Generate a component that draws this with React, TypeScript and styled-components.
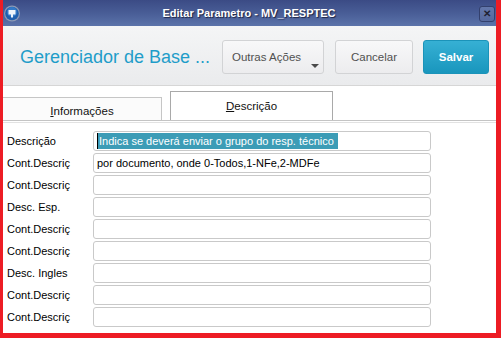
import React from 'react';
import styled, { createGlobalStyle } from 'styled-components';

const GlobalStyle = createGlobalStyle`
  html, body {
    margin: 0;
    padding: 0;
    background: #ffffff;
  }
  * {
    box-sizing: border-box;
  }
`;

const Frame = styled.div`
  width: 501px;
  height: 338px;
  background-color: #ed1c24;
  padding: 0 5px 5px 3px;
  font-family: 'Liberation Sans', Arial, sans-serif;
`;

const Window = styled.div`
  height: 100%;
  display: flex;
  flex-direction: column;
  background-color: #ffffff;
  overflow: hidden;
`;

const TitleBar = styled.div`
  height: 26px;
  flex-shrink: 0;
  display: flex;
  align-items: center;
  padding: 0 1px 0 0;
  background: linear-gradient(to bottom, #3b4b85 0%, #4a5f98 55%, #5b73aa 100%);
`;

const Logo = styled.div`
  width: 18px;
  height: 18px;
  display: flex;
  align-items: center;
`;

const Title = styled.div`
  flex: 1;
  text-align: center;
  color: #ffffff;
  font-size: 11px;
  font-weight: bold;
  text-shadow: 1px 1px 1px #1c2444;
  padding-right: 2px;
`;

const CloseButton = styled.div`
  width: 16px;
  height: 16px;
  margin-top: 2px;
  border: 1px solid #33406d;
  border-radius: 3px;
  background: linear-gradient(to bottom, #6377ab, #55689d);
  color: #1f2233;
  font-size: 10px;
  font-weight: bold;
  display: flex;
  align-items: center;
  justify-content: center;
  line-height: 1;
`;

const Header = styled.div`
  height: 60px;
  flex-shrink: 0;
  display: flex;
  align-items: flex-start;
  padding: 14px 7px 0 17px;
  background: linear-gradient(to bottom, #f4f5f6, #eaebed);
  border-bottom: 1px solid #d6d6d6;
`;

const AppName = styled.div`
  flex: 1;
  min-width: 0;
  color: #1f9dc9;
  font-size: 18px;
  line-height: 34px;
  white-space: nowrap;
`;

const ActionButton = styled.div<{ $primary?: boolean; $width: number; $gap: number }>`
  position: relative;
  flex-shrink: 0;
  width: ${(p) => p.$width}px;
  height: 34px;
  margin-left: ${(p) => p.$gap}px;
  border-radius: 3px;
  border: 1px solid ${(p) => (p.$primary ? '#1b93b9' : '#d2d3d5')};
  background: ${(p) =>
    p.$primary
      ? 'linear-gradient(to bottom, #36b0d4, #1996bd)'
      : 'linear-gradient(to bottom, #f8f8f9, #ececee)'};
  color: ${(p) => (p.$primary ? '#ffffff' : '#505050')};
  font-size: 11.5px;
  font-weight: ${(p) => (p.$primary ? 'bold' : 'normal')};
  display: flex;
  align-items: center;
  justify-content: center;
`;

const MenuButton = styled(ActionButton)`
  justify-content: flex-start;
  padding-left: 9px;
`;

const Caret = styled.div`
  position: absolute;
  right: 4px;
  bottom: 5px;
  width: 0;
  height: 0;
  border-left: 4px solid transparent;
  border-right: 4px solid transparent;
  border-top: 4px solid #4a4a4a;
`;

const TabStrip = styled.div`
  height: 35px;
  flex-shrink: 0;
  display: flex;
  align-items: flex-end;
  gap: 8px;
  border-bottom: 1px solid #c4c4c4;
`;

const Tab = styled.div<{ $active?: boolean }>`
  width: ${(p) => (p.$active ? 163 : 159)}px;
  height: ${(p) => (p.$active ? 29 : 23)}px;
  border: 1px solid ${(p) => (p.$active ? '#a9a9a9' : '#c6c6c6')};
  border-bottom: none;
  border-left: ${(p) => (p.$active ? '1px solid #a9a9a9' : 'none')};
  background: ${(p) => (p.$active ? '#ffffff' : '#fbfbfb')};
  color: #111111;
  font-size: 11.5px;
  display: flex;
  align-items: center;
  justify-content: center;
  padding-top: ${(p) => (p.$active ? 0 : 4)}px;
  u {
    text-decoration: underline;
  }
`;

const Form = styled.div`
  flex: 1;
  display: flex;
  flex-direction: column;
  gap: 2px;
  padding: 8px 0 0 0;
  border-top: 1px solid #e2e2e2;
  margin-top: 1px;
`;

const Row = styled.div`
  height: 20px;
  flex-shrink: 0;
  display: flex;
  align-items: center;
`;

const Label = styled.div`
  width: 90px;
  padding-left: 4px;
  color: #000000;
  font-size: 11px;
  white-space: nowrap;
`;

const Field = styled.div`
  width: 338px;
  height: 20px;
  border: 1px solid #c9c9c9;
  border-radius: 3px;
  background: #ffffff;
  font-size: 11px;
  color: #000000;
  display: flex;
  align-items: center;
  padding-left: 3px;
  white-space: nowrap;
  overflow: hidden;
`;

const Selected = styled.span`
  background: #3c9cb6;
  color: #ffffff;
  padding: 2px 4px 2px 1px;
  border-left: 1px solid #000000;
`;

const rows: { label: string; value?: string; selected?: boolean }[] = [
  { label: 'Descrição', value: 'Indica se deverá enviar o grupo do resp. técnico', selected: true },
  { label: 'Cont.Descriç', value: 'por documento, onde 0-Todos,1-NFe,2-MDFe' },
  { label: 'Cont.Descriç' },
  { label: 'Desc. Esp.' },
  { label: 'Cont.Descriç' },
  { label: 'Cont.Descriç' },
  { label: 'Desc. Ingles' },
  { label: 'Cont.Descriç' },
  { label: 'Cont.Descriç' },
];

const App: React.FC = () => {
  return (
    <>
      <GlobalStyle />
      <Frame>
        <Window>
          <TitleBar>
            <Logo>
              <svg width="18" height="18" viewBox="0 0 18 18">
                <circle cx="9" cy="9.5" r="8" fill="#8d99b5" />
                <circle cx="9" cy="9.5" r="6.8" fill="#1f5fae" />
                <circle cx="9" cy="8" r="5" fill="#3f86d2" opacity="0.7" />
                <path d="M5.5 6 h7 v4.5 h-2.5 v3 h-2 v-3 h-2.5 z" fill="#eef4fb" />
              </svg>
            </Logo>
            <Title>Editar Parametro - MV_RESPTEC</Title>
            <CloseButton>✕</CloseButton>
          </TitleBar>
          <Header>
            <AppName>Gerenciador de Base ...</AppName>
            <MenuButton $width={102} $gap={10}>
              Outras Ações
              <Caret />
            </MenuButton>
            <ActionButton $width={78} $gap={11}>
              Cancelar
            </ActionButton>
            <ActionButton $width={66} $gap={10} $primary>
              Salvar
            </ActionButton>
          </Header>
          <TabStrip>
            <Tab>
              <span>
                <u>I</u>nformações
              </span>
            </Tab>
            <Tab $active>
              <span>
                <u>D</u>escrição
              </span>
            </Tab>
          </TabStrip>
          <Form>
            {rows.map((r, i) => (
              <Row key={i}>
                <Label>{r.label}</Label>
                <Field>
                  {r.selected ? <Selected>{r.value}</Selected> : r.value}
                </Field>
              </Row>
            ))}
          </Form>
        </Window>
      </Frame>
    </>
  );
};

export default App;
